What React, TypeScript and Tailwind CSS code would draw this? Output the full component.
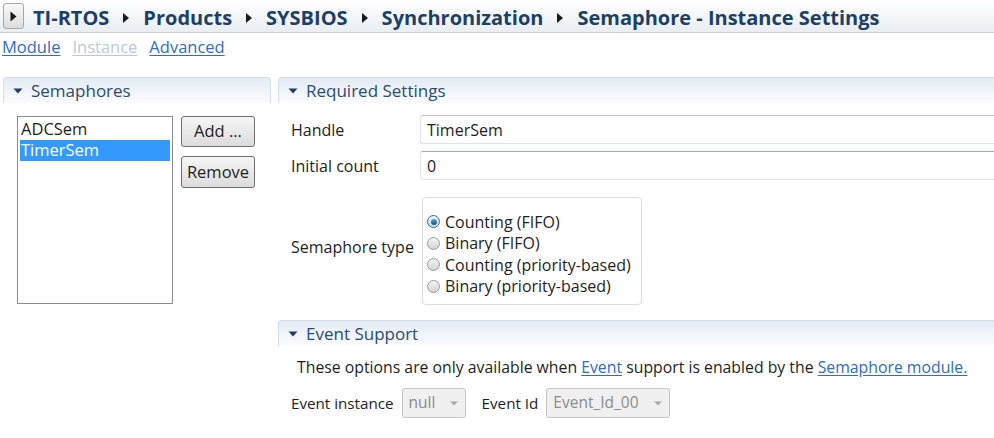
import React from "react";

const font = { fontFamily: '"Open Sans", "Noto Sans", sans-serif' };

function Sep() {
  return (
    <svg width="8" height="12" viewBox="0 0 8 12" className="mx-[13px] shrink-0">
      <path d="M1 1 L7 6 L1 11 Z" fill="#1a1a1a" />
    </svg>
  );
}

function Down() {
  return (
    <svg width="10" height="8" viewBox="0 0 10 8" className="shrink-0">
      <path d="M0.5 1.5 L9.5 1.5 L5 6.5 Z" fill="#1f3f66" />
    </svg>
  );
}

function SectionHeader({ title, className = "" }: { title: string; className?: string }) {
  return (
    <div
      className={
        "h-[26px] flex items-center gap-[8px] pl-[9px] rounded-tl-[4px] rounded-tr-[4px] border-t border-l border-r border-[#d3dee6] bg-gradient-to-b from-[#e4ebf4] to-[#fbfcfe] " +
        className
      }
    >
      <Down />
      <span className="text-[17px] text-[#2b4b72] leading-none">{title}</span>
    </div>
  );
}

function Radio({ checked, label }: { checked?: boolean; label: string }) {
  return (
    <div className="flex items-center h-[21.5px] gap-[5px]">
      <span
        className={
          "w-[13px] h-[13px] rounded-full border flex items-center justify-center shrink-0 " +
          (checked
            ? "border-[#3c6d8e] bg-gradient-to-b from-[#e8f2f8] to-[#c9dde9]"
            : "border-[#9a9a9a] bg-gradient-to-b from-[#f4f4f4] to-[#d4d4d4]")
        }
      >
        {checked && <span className="w-[6px] h-[6px] rounded-full bg-gradient-to-b from-[#5aa6d6] to-[#134f7e]" />}
      </span>
      <span className="text-[16px] text-[#1e1e1e] leading-none">{label}</span>
    </div>
  );
}

function Combo({ value, width }: { value: string; width: string }) {
  return (
    <div
      className={
        "h-[30px] rounded-[3px] border border-[#c5c5c5] bg-[#f0f0f0] flex items-center justify-between pl-[6px] pr-[7px] " +
        width
      }
    >
      <span className="text-[15.5px] text-[#8c8c8c] leading-none">{value}</span>
      <svg width="8" height="5" viewBox="0 0 8 5">
        <path d="M0 0.5 L8 0.5 L4 4.5 Z" fill="#a8a8a8" />
      </svg>
    </div>
  );
}

export default function App() {
  return (
    <div className="w-[994px] h-[438px] bg-white overflow-hidden text-[#1e1e1e]" style={font}>
      {/* Title bar */}
      <div className="h-[33px] flex items-center pl-[3px] border-b border-[#c9cfd6] bg-gradient-to-b from-[#ffffff] to-[#e9eef3]">
        <div className="w-[21px] h-[26px] rounded-[3px] border border-[#a7a7a7] bg-gradient-to-b from-[#fafafa] to-[#dcdcdc] flex items-center justify-center">
          <svg width="7" height="11" viewBox="0 0 7 11">
            <path d="M0.5 0.5 L6.5 5.5 L0.5 10.5 Z" fill="#1a1a1a" />
          </svg>
        </div>
        <div className="flex items-center ml-[9px] mt-[4px] text-[20px] font-bold text-[#1d3f66] leading-none whitespace-nowrap">
          <span>TI-RTOS</span>
          <Sep />
          <span>Products</span>
          <Sep />
          <span>SYSBIOS</span>
          <Sep />
          <span>Synchronization</span>
          <Sep />
          <span>Semaphore - Instance Settings</span>
        </div>
      </div>

      {/* Links */}
      <div className="h-[28px] flex items-center gap-[12px] pl-[2px] text-[16.5px] leading-none">
        <span className="text-[#2f6cc4] underline underline-offset-2">Module</span>
        <span className="text-[#b8c9dd] underline underline-offset-2">Instance</span>
        <span className="text-[#2f6cc4] underline underline-offset-2">Advanced</span>
      </div>

      {/* Main */}
      <div className="flex pt-[16px]">
        {/* Left column */}
        <div className="w-[268px] ml-[3px] shrink-0">
          <SectionHeader title="Semaphores" />
          <div className="flex pt-[13px] pl-[14px]">
            <div className="w-[156px] h-[188px] border border-[#8c8c8c] p-[2px] text-[16.5px]">
              <div className="h-[21px] flex items-center pl-[1px]">ADCSem</div>
              <div className="h-[21px] flex items-center pl-[1px] bg-[#3399ff] text-white">TimerSem</div>
            </div>
            <div className="flex flex-col gap-[9px] ml-[8px]">
              <button className="w-[74px] h-[31px] rounded-[3px] border border-[#707070] bg-gradient-to-b from-[#f6f6f6] to-[#dcdcdc] text-[16.5px] text-[#1e1e1e] leading-none">
                Add ...
              </button>
              <button className="w-[74px] h-[32px] rounded-[3px] border border-[#707070] bg-gradient-to-b from-[#f6f6f6] to-[#dcdcdc] text-[16.5px] text-[#1e1e1e] leading-none">
                Remove
              </button>
            </div>
          </div>
        </div>

        {/* Right column */}
        <div className="flex-1 ml-[7px] min-w-0">
          <SectionHeader title="Required Settings" className="mr-[-6px]" />
          <div className="pt-[12px] text-[16px]">
            <div className="flex items-center h-[29px]">
              <span className="w-[142px] pl-[13px] shrink-0">Handle</span>
              <div className="flex-1 h-[29px] rounded-[3px] border border-[#e3e3e3] border-t-[#c4c4c4] flex items-center pl-[6px] mr-[-6px]">
                TimerSem
              </div>
            </div>
            <div className="flex items-center h-[29px] mt-[7px]">
              <span className="w-[142px] pl-[13px] shrink-0">Initial count</span>
              <div className="flex-1 h-[29px] rounded-[3px] border border-[#e3e3e3] border-t-[#8fb1c2] flex items-center pl-[6px] mr-[-6px]">
                0
              </div>
            </div>
            <div className="flex items-center mt-[17px]">
              <span className="w-[144px] pl-[13px] shrink-0 mb-[8px] whitespace-nowrap">Semaphore type</span>
              <div className="w-[220px] h-[108px] rounded-[4px] border border-[#dcdcdc] pt-[13px] pl-[4px]">
                <Radio checked label="Counting (FIFO)" />
                <Radio label="Binary (FIFO)" />
                <Radio label="Counting (priority-based)" />
                <Radio label="Binary (priority-based)" />
              </div>
            </div>
          </div>

          <SectionHeader title="Event Support" className="mt-[15px] mr-[-6px]" />
          <div>
            <div className="pl-[19px] pt-[4px] h-[40px] flex items-center text-[15.8px]">
              <span>
                These options are only available when{" "}
                <span className="text-[#2f6cc4] underline underline-offset-2">Event</span> support is enabled by the{" "}
                <span className="text-[#2f6cc4] underline underline-offset-2">Semaphore module.</span>
              </span>
            </div>
            <div className="flex items-center pl-[13px] mt-[2px] text-[15.2px]">
              <span className="mr-[8px]">Event instance</span>
              <Combo value="null" width="w-[64px]" />
              <span className="ml-[16px] mr-[8px]">Event Id</span>
              <Combo value="Event_Id_00" width="w-[124px]" />
            </div>
          </div>
        </div>
      </div>
    </div>
  );
}
